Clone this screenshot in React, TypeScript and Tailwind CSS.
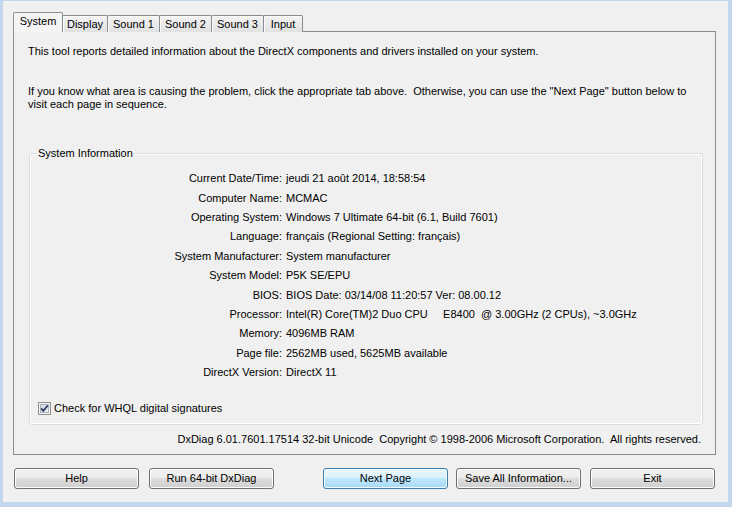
import React from 'react';

const tabs = [
  { label: 'System', w: 'w-[50px]', active: true },
  { label: 'Display', w: 'w-[46px]' },
  { label: 'Sound 1', w: 'w-[53px]' },
  { label: 'Sound 2', w: 'w-[53px]' },
  { label: 'Sound 3', w: 'w-[53px]' },
  { label: 'Input', w: 'w-[40px]' },
];

const rows: [string, string][] = [
  ['Current Date/Time:', 'jeudi 21 août 2014, 18:58:54'],
  ['Computer Name:', 'MCMAC'],
  ['Operating System:', 'Windows 7 Ultimate 64-bit (6.1, Build 7601)'],
  ['Language:', 'français (Regional Setting: français)'],
  ['System Manufacturer:', 'System manufacturer'],
  ['System Model:', 'P5K SE/EPU'],
  ['BIOS:', 'BIOS Date: 03/14/08 11:20:57 Ver: 08.00.12'],
  ['Processor:', 'Intel(R) Core(TM)2 Duo CPU     E8400  @ 3.00GHz (2 CPUs), ~3.0GHz'],
  ['Memory:', '4096MB RAM'],
  ['Page file:', '2562MB used, 5625MB available'],
  ['DirectX Version:', 'DirectX 11'],
];

const Button = ({ label, primary }: { label: string; primary?: boolean }) => (
  <button
    className={
      primary
        ? 'w-[125px] h-[21px] rounded-[3px] border border-[#3c7fb1] bg-[linear-gradient(#eaf6fd_0%,#d9f0fc_50%,#bee6fd_50%,#a7d9f5_100%)] shadow-[inset_0_0_0_1px_#f4fbff] flex items-center justify-center'
        : 'w-[125px] h-[21px] rounded-[3px] border border-[#707070] bg-[linear-gradient(#f2f2f2_0%,#ebebeb_50%,#dddddd_50%,#cfcfcf_100%)] shadow-[inset_0_0_0_1px_#fcfcfc] flex items-center justify-center'
    }
  >
    {label}
  </button>
);

const CheckBox = () => (
  <svg width="13" height="13" viewBox="0 0 13 13" className="shrink-0">
    <defs>
      <linearGradient id="cbg" x1="0" y1="0" x2="1" y2="1">
        <stop offset="0" stopColor="#cbd2da" />
        <stop offset="1" stopColor="#f7f8f9" />
      </linearGradient>
    </defs>
    <rect x="0.5" y="0.5" width="12" height="12" fill="#f5f5f5" stroke="#8e8f8f" />
    <rect x="2.5" y="2.5" width="8" height="8" fill="url(#cbg)" stroke="#b0b6be" />
    <path d="M3.2 6.4 L5.3 8.9 L9.8 3.4" stroke="#2b3d63" strokeWidth="1.7" fill="none" />
  </svg>
);

export default function App() {
  return (
    <div className="w-[732px] h-[507px] bg-[#c2d7ee] pl-[3px] pt-[1px] pr-[4px] pb-[5px] font-['Liberation_Sans',Arial,sans-serif] text-[11px] leading-[13px] text-black">
      <div className="w-full h-full bg-[#f0f0f0] flex flex-col pl-[10px] pr-[12px] pt-[11px]">
        {/* Tabs */}
        <div className="flex items-end h-[20px] relative z-10">
          {tabs.map((t, i) =>
            t.active ? (
              <div
                key={t.label}
                className={`${t.w} h-[20px] border-l border-t border-r border-[#898c95] rounded-t-[2px] bg-[#f4f4f4] flex items-center justify-center pb-[2px] relative z-20`}
              >
                {t.label}
              </div>
            ) : (
              <div
                key={t.label}
                className={`${t.w} ${i > 0 ? '-ml-px' : ''} h-[17px] border-l border-t border-r border-[#898c95] rounded-t-[2px] bg-[linear-gradient(#f3f3f3,#e1e1e1)] shadow-[inset_1px_1px_0_#fbfbfb] flex items-center justify-center`}
              >
                {t.label}
              </div>
            )
          )}
        </div>

        {/* Tab panel */}
        <div className="-mt-px h-[424px] border border-[#898c95] bg-[#f0f0f0] flex flex-col">
          <p className="pl-[14px] pt-[13px]">
            This tool reports detailed information about the DirectX components and drivers installed on your system.
          </p>
          <p className="pl-[14px] pr-[20px] mt-[27px]">
            If you know what area is causing the problem, click the appropriate tab above.&nbsp; Otherwise, you can use the "Next Page" button below to visit each page in sequence.
          </p>

          <fieldset className="ml-[15px] mr-[12px] mt-[36px] border border-[#d5dfe5] rounded-[3px] shadow-[inset_0_0_0_1px_#ffffff] pb-[9px]">
            <legend className="ml-[6px] px-[2px] bg-[#f0f0f0]">System Information</legend>
            <div className="grid grid-cols-[252px_1fr] gap-x-[4px] pt-[9px]">
              {rows.map(([k, v]) => (
                <React.Fragment key={k}>
                  <div className="h-[19.4px] flex items-center justify-end">{k}</div>
                  <div className="h-[19.4px] flex items-center whitespace-pre">{v}</div>
                </React.Fragment>
              ))}
            </div>
            <div className="flex items-center gap-[3px] pl-[8px] mt-[20px]">
              <CheckBox />
              <span>Check for WHQL digital signatures</span>
            </div>
          </fieldset>

          <div className="mt-[8px] pr-[14px] text-right whitespace-pre">
            DxDiag 6.01.7601.17514 32-bit Unicode  Copyright © 1998-2006 Microsoft Corporation.  All rights reserved.
          </div>
        </div>

        {/* Buttons */}
        <div className="flex mt-[13px] pl-[1px]">
          <div className="flex gap-[10px]">
            <Button label="Help" />
            <Button label="Run 64-bit DxDiag" />
          </div>
          <div className="flex gap-[8px] ml-[49px]">
            <Button label="Next Page" primary />
            <Button label="Save All Information..." />
            <div className="ml-[1px]">
              <Button label="Exit" />
            </div>
          </div>
        </div>
      </div>
    </div>
  );
}
